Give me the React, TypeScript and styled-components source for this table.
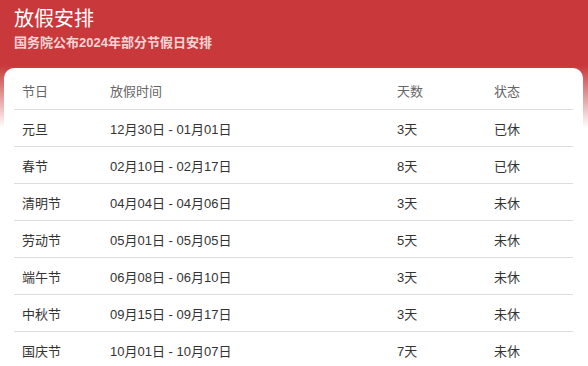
import React from "react";
import styled, { createGlobalStyle } from "styled-components";

const GlobalStyle = createGlobalStyle`
  html, body {
    margin: 0;
    padding: 0;
  }
  body {
    font-family: "Liberation Sans", "Noto Sans CJK SC", sans-serif;
    background: linear-gradient(180deg, #c9393b 0, #c9393b 66px, #ffffff 128px, #ffffff 100%);
    min-height: 366px;
  }
`;

const Page = styled.div`
  display: flex;
  flex-direction: column;
`;

const Header = styled.header`
  padding: 6px 14px 0;
  height: 62px;
  box-sizing: border-box;
  color: #fff;
`;

const Title = styled.h1`
  margin: 0;
  font-size: 20px;
  font-weight: normal;
  line-height: 26px;
`;

const Subtitle = styled.p`
  margin: 3px 0 0;
  font-size: 13px;
  font-weight: bold;
  line-height: 16px;
  color: rgba(255, 255, 255, 0.8);
`;

const Card = styled.section`
  margin: 6px 5px 0 4px;
  padding: 4px 10px 0;
  background: #fff;
  border-radius: 10px 10px 0 0;
`;

const Table = styled.table`
  width: 100%;
  border-collapse: collapse;
  table-layout: fixed;
  font-size: 13px;
`;

const Th = styled.th`
  text-align: left;
  font-weight: normal;
  color: #666;
  height: 37px;
  padding: 0 0 0 8px;
  border-bottom: 1px solid #ddd;
`;

const Td = styled.td`
  color: #333;
  height: 36px;
  padding: 0 0 0 8px;
  border-bottom: 1px solid #ddd;
`;

const Row = styled.tr<{ $last?: boolean }>`
  td {
    border-bottom: ${(p) => (p.$last ? "none" : "1px solid #ddd")};
  }
`;

interface Holiday {
  name: string;
  range: string;
  days: string;
  status: string;
}

const holidays: Holiday[] = [
  { name: "元旦", range: "12月30日 - 01月01日", days: "3天", status: "已休" },
  { name: "春节", range: "02月10日 - 02月17日", days: "8天", status: "已休" },
  { name: "清明节", range: "04月04日 - 04月06日", days: "3天", status: "未休" },
  { name: "劳动节", range: "05月01日 - 05月05日", days: "5天", status: "未休" },
  { name: "端午节", range: "06月08日 - 06月10日", days: "3天", status: "未休" },
  { name: "中秋节", range: "09月15日 - 09月17日", days: "3天", status: "未休" },
  { name: "国庆节", range: "10月01日 - 10月07日", days: "7天", status: "未休" },
];

export default function App() {
  return (
    <Page>
      <GlobalStyle />
      <Header>
        <Title>放假安排</Title>
        <Subtitle>国务院公布2024年部分节假日安排</Subtitle>
      </Header>
      <Card>
        <Table>
          <colgroup>
            <col style={{ width: 88 }} />
            <col style={{ width: 287 }} />
            <col style={{ width: 97 }} />
            <col />
          </colgroup>
          <thead>
            <tr>
              <Th>节日</Th>
              <Th>放假时间</Th>
              <Th>天数</Th>
              <Th>状态</Th>
            </tr>
          </thead>
          <tbody>
            {holidays.map((h, i) => (
              <Row key={h.name} $last={i === holidays.length - 1}>
                <Td>{h.name}</Td>
                <Td>{h.range}</Td>
                <Td>{h.days}</Td>
                <Td>{h.status}</Td>
              </Row>
            ))}
          </tbody>
        </Table>
      </Card>
    </Page>
  );
}
